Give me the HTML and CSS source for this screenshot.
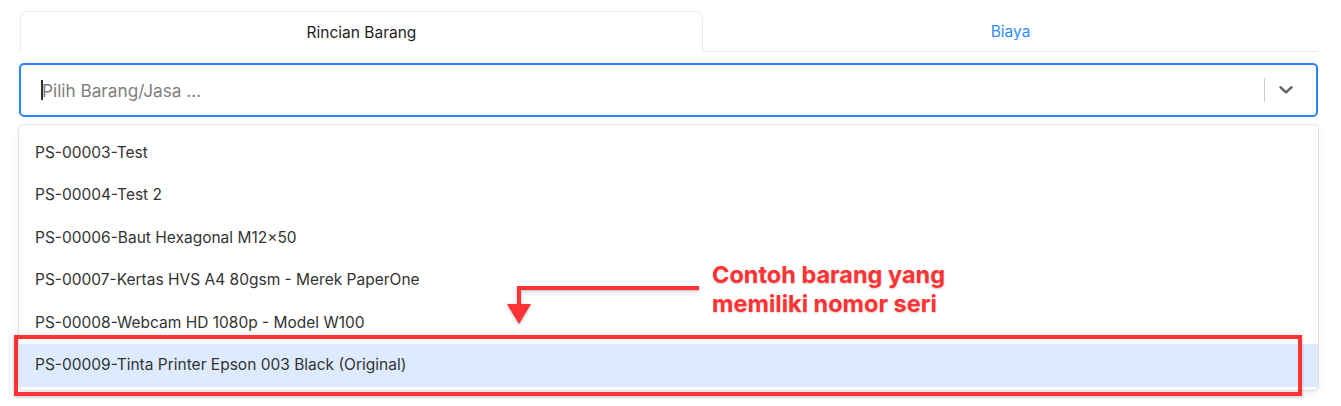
FILE: index.html
```html
<!DOCTYPE html>
<html lang="id">
<head>
<meta charset="utf-8">
<title>Pilih Barang</title>
<link rel="stylesheet" href="styles.css">
</head>
<body>
<div class="page">
  <div class="tabs">
    <div class="tab tab-active">Rincian Barang</div>
    <div class="tab tab-link">Biaya</div>
  </div>

  <div class="select">
    <div class="select-value">
      <span class="caret"></span>
      <span class="placeholder">Pilih Barang/Jasa ...</span>
    </div>
    <div class="select-indicators">
      <span class="select-sep"></span>
      <svg class="chevron" viewBox="0 0 14 8" width="14" height="8" aria-hidden="true">
        <path d="M1.6 1.4 L7 6.4 L12.4 1.4" fill="none" stroke="#666666" stroke-width="2.6" stroke-linecap="round" stroke-linejoin="round"/>
      </svg>
    </div>
  </div>

  <div class="menu">
    <div class="option">PS-00003-Test</div>
    <div class="option">PS-00004-Test 2</div>
    <div class="option">PS-00006-Baut Hexagonal M12×50</div>
    <div class="option">PS-00007-Kertas HVS A4 80gsm - Merek PaperOne</div>
    <div class="option">PS-00008-Webcam HD 1080p - Model W100</div>
    <div class="option option-focused">PS-00009-Tinta Printer Epson 003 Black (Original)</div>
  </div>

  <div class="callout-box"></div>
  <svg class="callout-arrow" viewBox="0 0 210 50" width="210" height="50" aria-hidden="true">
    <polyline points="199,8 19,8 19,27" fill="none" stroke="#ff3333" stroke-width="4"/>
    <polygon points="7,24 31,24 19,44" fill="#ff3333"/>
  </svg>
  <div class="callout-text">Contoh barang yang<br>memiliki nomor seri</div>
</div>
</body>
</html>
```

FILE: styles.css
```css
* { box-sizing: border-box; }

html, body {
  margin: 0;
  padding: 0;
  background: #ffffff;
}

body {
  font-family: Inter, "Noto Sans", "Liberation Sans", sans-serif;
  color: #333333;
}

.page {
  position: relative;
  width: 1341px;
  height: 406px;
  padding: 11px 23px 0 19px;
  overflow: hidden;
}

/* Tabs */
.tabs {
  display: flex;
  height: 41px;
  padding-left: 1px;
}

.tab {
  display: flex;
  align-items: center;
  justify-content: center;
  font-size: 15.5px;
}

.tab-active {
  width: 683px;
  border: 1px solid #ececec;
  border-bottom: none;
  border-radius: 7px 7px 0 0;
  color: #1e1e1e;
}

.tab-link {
  flex: 1;
  border-bottom: 1px solid #ececec;
  color: #2f8cff;
}

/* Select control */
.select {
  margin-top: 11px;
  height: 54px;
  border: 2px solid #2684ff;
  border-radius: 5px;
  display: flex;
  align-items: center;
  background: #ffffff;
}

.select-value {
  flex: 1;
  display: flex;
  align-items: center;
  padding-left: 20px;
}

.caret {
  width: 2px;
  height: 20px;
  background: #333333;
  margin-right: -1px;
}

.placeholder {
  font-size: 17.2px;
  color: #808080;
}

.select-indicators {
  display: flex;
  align-items: center;
  padding-right: 23px;
}

.select-sep {
  width: 1px;
  height: 24px;
  background: #cccccc;
  margin-right: 14px;
}

.chevron {
  display: block;
}

/* Menu */
.menu {
  margin-top: 8px;
  border-radius: 5px;
  padding: 6.5px 0 3px;
  background: #ffffff;
  box-shadow: 0 0 0 1px rgba(0, 0, 0, 0.09), 0 3px 8px rgba(0, 0, 0, 0.08);
}

.option {
  padding: 12px 16px;
  font-size: 15.5px;
  line-height: 18.6px;
  color: #333333;
}

.option-focused {
  background: #deebff;
}

/* Annotation overlay */
.callout-box {
  position: absolute;
  left: 14px;
  top: 335px;
  width: 1288px;
  height: 61px;
  border: 4px solid #ff3333;
  box-shadow: 0 1px 3px rgba(0, 0, 0, 0.25);
}

.callout-arrow {
  position: absolute;
  left: 500px;
  top: 280px;
  filter: drop-shadow(0 1px 1.5px rgba(0, 0, 0, 0.3));
}

.callout-text {
  position: absolute;
  left: 712px;
  top: 261px;
  font-size: 23.5px;
  line-height: 28.5px;
  font-weight: 700;
  color: #ff3333;
  text-shadow: 0 1px 2px rgba(0, 0, 0, 0.2);
}
```
